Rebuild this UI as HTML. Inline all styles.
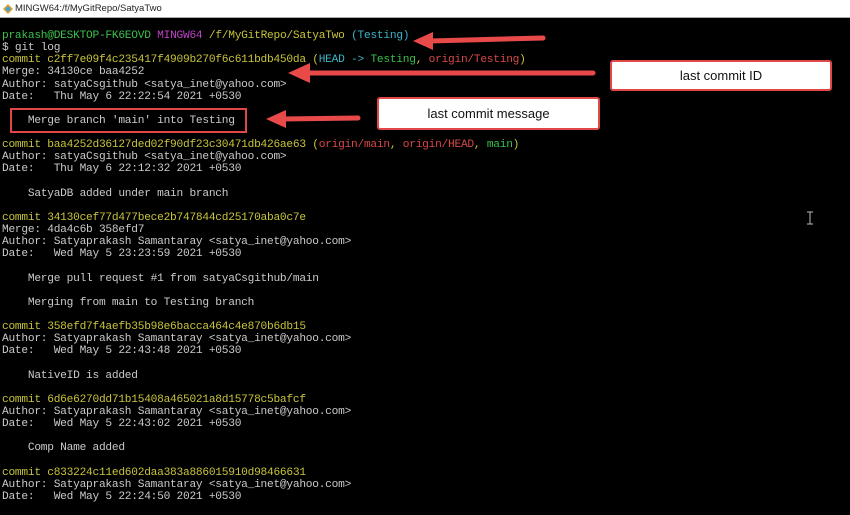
<!DOCTYPE html>
<html><head><style>
body{margin:0;width:850px;height:515px;background:#000;overflow:hidden;position:relative;font-family:"Liberation Mono",monospace}
.title{position:absolute;left:0;top:0;width:850px;height:17px;background:#fff;border-bottom:1px solid #aaa;font:9.5px "Liberation Sans",sans-serif;color:#222;line-height:17px}
.title span{position:absolute;left:15px}
.term{position:absolute;left:2px;top:30px;font-size:11.2px;line-height:12.13px;color:#cacaca;white-space:pre;letter-spacing:-0.25px}
.y{color:#c8c43c}.g{color:#3cc04c}.m{color:#c040c8}.c{color:#3cb4c8}.r{color:#d84848}
.box{position:absolute;background:#fff;border:2px solid #e04848;border-radius:3px;font:13px "Liberation Sans",sans-serif;color:#111;text-align:center}
</style></head><body>
<div class="title"><svg style="position:absolute;left:3px;top:4px" width="10" height="10"><polygon points="5,0 10,5 5,10 0,5" fill="#e8a030"/><polygon points="5,2 8,5 5,8 2,5" fill="#40a0d0"/></svg><span>MINGW64:/f/MyGitRepo/SatyaTwo</span></div>
<div class="term"><span class="g">prakash@DESKTOP-FK6EOVD</span> <span class="m">MINGW64</span> <span class="y">/f/MyGitRepo/SatyaTwo</span> <span class="c">(Testing)</span>
$ git log
<span class="y">commit c2ff7e09f4c235417f4909b270f6c611bdb450da (<span class="c">HEAD -&gt; </span><span class="g">Testing</span>, <span class="r">origin/Testing</span>)</span>
Merge: 34130ce baa4252
Author: satyaCsgithub &lt;satya_inet@yahoo.com&gt;
Date:   Thu May 6 22:22:54 2021 +0530

    Merge branch 'main' into Testing

<span class="y">commit baa4252d36127ded02f90df23c30471db426ae63 (<span class="r">origin/main</span>, <span class="r">origin/HEAD</span>, <span class="g">main</span>)</span>
Author: satyaCsgithub &lt;satya_inet@yahoo.com&gt;
Date:   Thu May 6 22:12:32 2021 +0530

    SatyaDB added under main branch

<span class="y">commit 34130cef77d477bece2b747844cd25170aba0c7e</span>
Merge: 4da4c6b 358efd7
Author: Satyaprakash Samantaray &lt;satya_inet@yahoo.com&gt;
Date:   Wed May 5 23:23:59 2021 +0530

    Merge pull request #1 from satyaCsgithub/main

    Merging from main to Testing branch

<span class="y">commit 358efd7f4aefb35b98e6bacca464c4e870b6db15</span>
Author: Satyaprakash Samantaray &lt;satya_inet@yahoo.com&gt;
Date:   Wed May 5 22:43:48 2021 +0530

    NativeID is added

<span class="y">commit 6d6e6270dd71b15408a465021a8d15778c5bafcf</span>
Author: Satyaprakash Samantaray &lt;satya_inet@yahoo.com&gt;
Date:   Wed May 5 22:43:02 2021 +0530

    Comp Name added

<span class="y">commit c833224c11ed602daa383a886015910d98466631</span>
Author: Satyaprakash Samantaray &lt;satya_inet@yahoo.com&gt;
Date:   Wed May 5 22:24:50 2021 +0530</div>
<div style="position:absolute;left:10px;top:108px;width:233px;height:21px;border:2px solid #e04848"></div>
<div class="box" style="left:610px;top:60px;width:218px;height:27px;line-height:27px">last commit ID</div>
<div class="box" style="left:377px;top:97px;width:219px;height:29px;line-height:29px">last commit message</div>
<svg style="position:absolute;left:0;top:0" width="850" height="515">
<g stroke="#e84a4a" stroke-width="5" stroke-linecap="round" fill="#e84a4a">
<line x1="543" y1="38" x2="430" y2="41"/>
<line x1="593" y1="73" x2="305" y2="73"/>
<line x1="358" y1="118" x2="282" y2="119"/>
</g>
<g fill="#e84a4a">
<polygon points="413,41 433,32 433,50"/>
<polygon points="288,73 310,63 310,83"/>
<polygon points="266,119 286,110 286,128"/>
</g>
<path d="M807 212h6M810 212v12M807 224h6" stroke="#bbb" stroke-width="1" fill="none"/>
</svg>
</body></html>
